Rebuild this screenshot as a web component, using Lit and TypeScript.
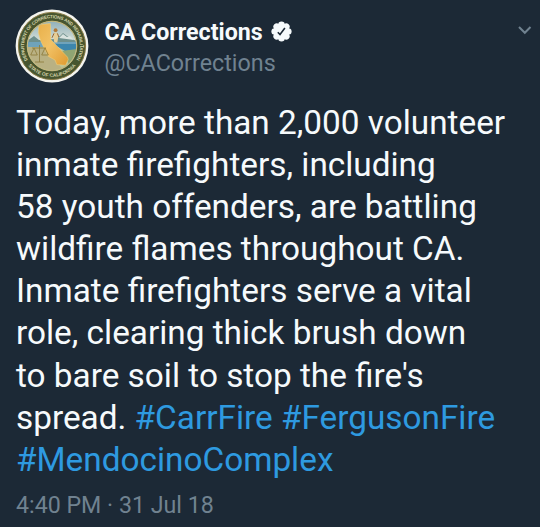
import { LitElement, html, css, svg } from "lit";
import { customElement } from "lit/decorators.js";

interface Chunk {
  text: string;
  tag?: boolean;
}

const LINES: Chunk[][] = [
  [{ text: "Today, more than 2,000 volunteer" }],
  [{ text: "inmate firefighters, including" }],
  [{ text: "58 youth offenders, are battling" }],
  [{ text: "wildfire flames throughout CA." }],
  [{ text: "Inmate firefighters serve a vital" }],
  [{ text: "role, clearing thick brush down" }],
  [{ text: "to bare soil to stop the fire's" }],
  [
    { text: "spread. " },
    { text: "#CarrFire", tag: true },
    { text: " " },
    { text: "#FergusonFire", tag: true },
  ],
  [{ text: "#MendocinoComplex", tag: true }],
];

@customElement("cdcr-seal")
export class CdcrSeal extends LitElement {
  static styles = css`
    :host {
      display: block;
      width: 74px;
      height: 74px;
    }
    svg {
      display: block;
    }
    text {
      font-family: "Liberation Sans", Arial, sans-serif;
      font-weight: 700;
      fill: #d3d3aa;
    }
  `;

  render() {
    return html`
      <svg width="74" height="74" viewBox="0 0 74 74">
        <defs>
          <clipPath id="scene"><circle cx="37" cy="37" r="24.2" /></clipPath>
          <linearGradient id="sky" x1="0" y1="0" x2="0" y2="1">
            <stop offset="0" stop-color="#8fb0bb" />
            <stop offset="1" stop-color="#e3e8dc" />
          </linearGradient>
          <linearGradient id="gold" x1="0" y1="0" x2="1" y2="1">
            <stop offset="0" stop-color="#e8b04a" />
            <stop offset=".45" stop-color="#f2c266" />
            <stop offset="1" stop-color="#e09a30" />
          </linearGradient>
          <path id="upper" d="M12.8 51A27.9 27.9 0 1 1 61.2 51" />
          <path id="lower" d="M10.9 53.6A31 31 0 0 0 63.1 53.6" />
        </defs>
        <circle cx="37" cy="37" r="36.4" fill="#f4f4ee" />
        <circle cx="37" cy="37" r="33.6" fill="#47552f" stroke="#8a7c46" stroke-width="1" />
        <circle cx="37" cy="37" r="25" fill="#b9ad78" />
        <g clip-path="url(#scene)">
          <rect x="12" y="12" width="50" height="24" fill="url(#sky)" />
          <path d="M12 32l7-5 5 4 16-1 5-3 3-3 4 3 9 5v5H12z" fill="#6d8f8c" />
          <path d="M44 29l4-4 4 3 3-1 4 4z" fill="#d9e3df" />
          <rect x="12" y="33" width="50" height="7" fill="#6fa3bb" />
          <path d="M12 38h50v24H12z" fill="#b9c39a" />
          <path d="M12 38h18l19 24H12z" fill="#b9b183" />
          <path d="M38 35h24v6l-12 1z" fill="#3c86ad" />
          <path d="M47 42l15-2v12l-8 3z" fill="#8fa573" />
          <path
            d="M23.8 15.6l11.6-1 .4 16 16.8 17.6.6 2.4-2.6 5.6-8.8-.6-1.8-4.6-6.6-3.6-4.2-8.2-3.6-7.4-2.2-8z"
            fill="url(#gold)"
            stroke="#f3d27c"
            stroke-width=".5"
          />
          <g stroke="#8b7938" fill="none" stroke-width=".8">
            <path d="M24.5 36v17M17 39h14M19 39l-3.3 7h6.6zM30 39l-3.3 7h6.6zM20 53h9" />
          </g>
          <circle cx="40.6" cy="21.2" r="1.9" fill="#b17836" />
          <path d="M39 23.4h3.2l1.1 4.6-1 5.4h-3l-.8-5.4z" fill="#e7ce96" />
          <path d="M39 24.4l-2 4.4M42.4 24.4l1.4 3.6" stroke="#9a6731" stroke-width="1" />
        </g>
        <circle cx="37" cy="37" r="24.8" fill="none" stroke="#c8bd84" stroke-width=".9" />
        ${svg`
          <text font-size="4.6">
            <textPath href="#upper" textLength="116" startOffset="0">DEPARTMENT OF CORRECTIONS AND REHABILITATION</textPath>
          </text>
          <text font-size="4.8">
            <textPath href="#lower" textLength="54" startOffset="4">STATE OF CALIFORNIA</textPath>
          </text>
        `}
      </svg>
    `;
  }
}

@customElement("app-root")
export class AppRoot extends LitElement {
  static styles = css`
    :host {
      display: block;
      box-sizing: border-box;
      height: 527px;
      padding: 9px 8px 0 15px;
      overflow: hidden;
      background: #1c2936;
      color: #f6fafc;
      font-family: Roboto, sans-serif;
    }
    .header {
      display: flex;
      height: 90px;
    }
    .who {
      flex: 1;
      padding: 9px 0 0 15.5px;
    }
    .name {
      display: flex;
      align-items: center;
      height: 27px;
      gap: 8px;
      font-size: 23.2px;
      font-weight: 700;
      white-space: nowrap;
    }
    .handle {
      margin-top: 4px;
      font-size: 23.3px;
      line-height: 28px;
      color: #708290;
    }
    .chevron {
      margin-top: 16px;
    }
    .body {
      padding: 3px 0 0 1px;
      font-size: 33.35px;
      line-height: 42.1px;
    }
    .line {
      white-space: pre;
    }
    .tag {
      color: #2e9ae0;
    }
    .time {
      padding: 10px 0 0 1px;
      font-size: 23.2px;
      line-height: 28px;
      color: #708290;
    }
    svg {
      display: block;
      flex: none;
    }
  `;

  render() {
    return html`
      <div class="header">
        <cdcr-seal></cdcr-seal>
        <div class="who">
          <div class="name">
            <span>CA Corrections</span>
            <svg width="21" height="21" viewBox="0 0 21 21">
              <g fill="#f6fafc">
                <circle cx="10.5" cy="10.5" r="8" />
                ${[0, 45, 90, 135, 180, 225, 270, 315].map(
                  (a) => svg`<circle cx="10.5" cy="3.7" r="3.3" transform="rotate(${a} 10.5 10.5)" />`
                )}
              </g>
              <path d="M6.8 11.2l2.2 2.3 4.9-6.5" fill="none" stroke="#1c2936" stroke-width="1.6" />
            </svg>
          </div>
          <div class="handle">@CACorrections</div>
        </div>
        <svg class="chevron" width="15" height="10" viewBox="0 0 15 10">
          <path d="M2 2l5.8 5.8L13.5 2" fill="none" stroke="#708290" stroke-width="2" />
        </svg>
      </div>
      <div class="body">
        ${LINES.map(
          (line) =>
            html`<div class="line">${line.map((c) => html`<span class="${c.tag ? "tag" : ""}">${c.text}</span>`)}</div>`
        )}
      </div>
      <div class="time">4:40 PM · 31 Jul 18</div>
    `;
  }
}
